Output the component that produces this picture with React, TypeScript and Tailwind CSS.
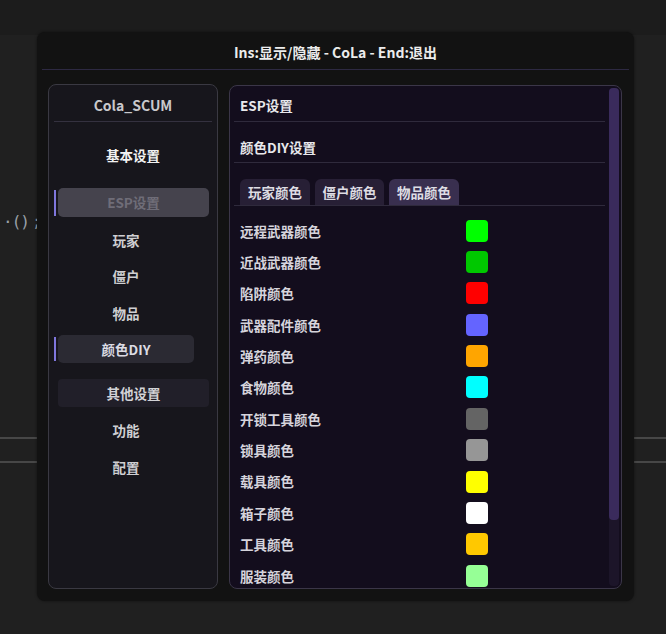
const font = { fontFamily: '"Noto Sans CJK SC", "Noto Sans", sans-serif' };

const colorRows = [
  { name: '远程武器颜色', color: 'bg-[#00ff00]' },
  { name: '近战武器颜色', color: 'bg-[#00c800]' },
  { name: '陷阱颜色', color: 'bg-[#ff0000]' },
  { name: '武器配件颜色', color: 'bg-[#6464ff]' },
  { name: '弹药颜色', color: 'bg-[#ffa500]' },
  { name: '食物颜色', color: 'bg-[#00ffff]' },
  { name: '开锁工具颜色', color: 'bg-[#646464]' },
  { name: '锁具颜色', color: 'bg-[#969696]' },
  { name: '载具颜色', color: 'bg-[#ffff00]' },
  { name: '箱子颜色', color: 'bg-[#ffffff]' },
  { name: '工具颜色', color: 'bg-[#ffc800]' },
  { name: '服装颜色', color: 'bg-[#96ff96]' },
];

const tabs = [
  { label: '玩家颜色', active: false, w: 'w-[70px]' },
  { label: '僵户颜色', active: false, w: 'w-[69px]' },
  { label: '物品颜色', active: true, w: 'w-[70px]' },
];

// sub entries sit centred under the narrower selected box, not the panel
const subItem = 'ml-[9px] w-[136px] h-[20px] text-center text-[13.5px] leading-[20px] font-bold text-[#cfcfd2]';

function Sidebar() {
  return (
    <div className="w-[170px] h-[505px] shrink-0 rounded-[8px] border border-[#3a3942] bg-[#17161c] flex flex-col">
      <div className="h-[36px] shrink-0 pt-[10px] text-center text-[14px] leading-[20px] font-bold text-[#c9c9cc]">Cola_SCUM</div>
      <div className="mx-[5px] h-px shrink-0 bg-[#34313f]" />

      <div className="mt-[23px] h-[20px] text-center text-[13.5px] leading-[20px] font-bold text-[#f2f2f2]">基本设置</div>

      <div className="mt-[23px] pl-[5px] flex items-center gap-[2px]">
        <div className="w-[2px] h-[26px] bg-[#7f76dc]" />
        <div className="w-[151px] h-[29px] rounded-[5px] bg-[#45434d] flex items-center justify-center text-[13.5px] font-bold text-[#6f6d78]">ESP设置</div>
      </div>

      <div className={`mt-[13px] ${subItem}`}>玩家</div>
      <div className={`mt-[16px] ${subItem}`}>僵户</div>
      <div className={`mt-[17px] ${subItem}`}>物品</div>

      <div className="mt-[12px] pl-[5px] flex items-center gap-[2px]">
        <div className="w-[2px] h-[24px] bg-[#7f76dc]" />
        <div className="w-[136px] h-[28px] rounded-[5px] bg-[#2b2a33] flex items-center justify-center text-[13.5px] font-bold text-[#dcdce4]">颜色DIY</div>
      </div>

      <div className="mt-[16px] ml-[9px] w-[151px] h-[28px] rounded-[4px] bg-[#211f29] flex items-center justify-center text-[13.5px] font-bold text-[#d2d2d6]">其他设置</div>

      <div className={`mt-[13px] ${subItem}`}>功能</div>
      <div className={`mt-[17px] ${subItem}`}>配置</div>
    </div>
  );
}

function ColorPanel() {
  return (
    <div className="w-[393px] h-[504px] mt-px shrink-0 rounded-[8px] border border-[#3b3648] bg-[#130d1d] flex overflow-hidden">
      <div className="flex-1 pl-[4px] pr-[4px] flex flex-col">
        <div className="h-[35px] shrink-0 pt-[9px] pl-[6px] text-[13.5px] leading-[20px] font-bold text-[#e8e8ec]">ESP设置</div>
        <div className="h-px shrink-0 bg-[#2f2a3c]" />
        <div className="h-[40px] shrink-0 pt-[15px] pl-[6px] text-[13.5px] leading-[20px] font-bold text-[#e8e8ec]">颜色DIY设置</div>
        <div className="h-px shrink-0 bg-[#2f2a3c]" />
        <div className="pt-[16px] pl-[6px] flex gap-[5px] shrink-0">
          {tabs.map((t) => (
            <div
              key={t.label}
              className={`${t.w} h-[26px] rounded-t-[6px] flex items-center justify-center text-[13.5px] font-bold text-[#dedde4] ${t.active ? 'bg-[#392f4f]' : 'bg-[#271f35]'}`}
            >
              {t.label}
            </div>
          ))}
        </div>
        <div className="h-px shrink-0 bg-[#2f2a3c]" />
        <div className="pt-[9px] flex flex-col shrink-0">
          {colorRows.map((r) => (
            <div key={r.name} className="h-[31.36px] pl-[6px] flex items-center shrink-0">
              <div className="w-[226px] text-[13.5px] font-bold text-[#d6d4dc]">{r.name}</div>
              <div className={`w-[22px] h-[22px] rounded-[4px] ${r.color}`} />
            </div>
          ))}
        </div>
      </div>
      <div className="w-[10px] mr-[2px] mt-[2px] mb-[2px] rounded-[4px] bg-[#1c1529] flex flex-col">
        <div className="h-[432px] rounded-[4px] bg-[#3a2b5c]" />
      </div>
    </div>
  );
}

export default function App() {
  return (
    <div className="relative w-[666px] h-[634px] overflow-hidden bg-[#202020]" style={font}>
      <div className="h-[35px] bg-[#1c1c1c]" />
      <div className="mt-[177px] pl-[3px] h-[20px] flex items-center text-[16px] leading-[20px] text-[#9aa0a8]" style={{ fontFamily: '"DejaVu Sans Mono", monospace' }}>
        <span className="tracking-[-1px]">·()</span>
        <span className="ml-[3px]">;</span>
      </div>
      <div className="mt-[205px] h-[2px] bg-[#474747]" />
      <div className="mt-[22px] h-[2px] bg-[#474747]" />

      <div className="absolute left-[37px] top-[32px] w-[597px] h-[569px] rounded-[8px] bg-[#121212] shadow-[0_0_3px_rgba(0,0,0,0.5)] flex flex-col">
        <div className="h-[37px] shrink-0 pt-[4px] flex items-center justify-center text-[14px] font-bold text-[#ececec]">
          Ins:显示/隐藏 - CoLa - End:退出
        </div>
        <div className="mx-[5px] h-px shrink-0 bg-[#2d2942]" />
        <div className="pt-[14px] px-[11px] flex gap-[11px]">
          <Sidebar />
          <ColorPanel />
        </div>
      </div>
    </div>
  );
}
